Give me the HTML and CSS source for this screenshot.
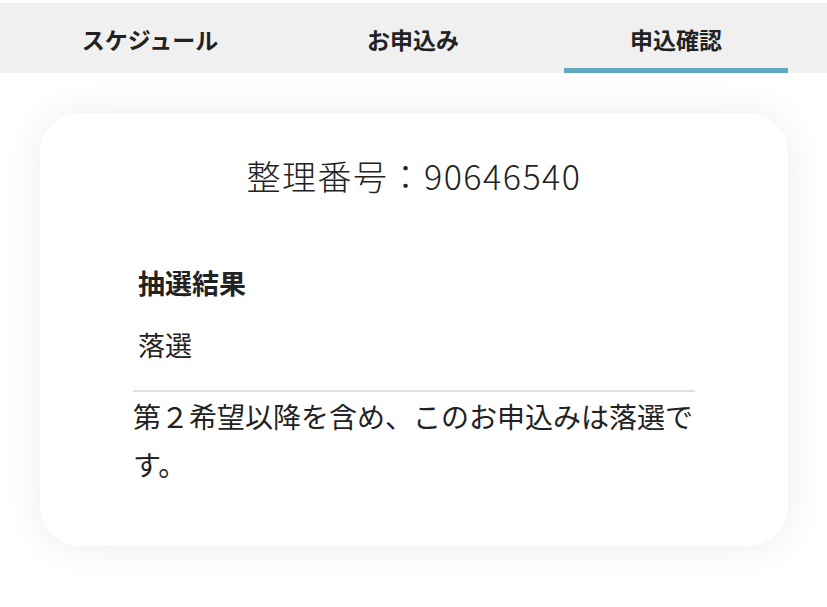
FILE: index.html
```html
<!DOCTYPE html>
<html lang="ja">
<head>
  <meta charset="UTF-8" />
  <meta name="viewport" content="width=device-width, initial-scale=1.0"/>
  <title>申込確認</title>
  <link rel="stylesheet" href="styles.css">
</head>
<body>

<nav class="tabs">
  <div class="tab">スケジュール</div>
  <div class="tab">お申込み</div>
  <div class="tab active">申込確認</div>
</nav>

<main class="main">
  <div class="card">
    <h1 class="number">整理番号：90646540</h1>

    <div class="result">
      <h2 class="result-label">抽選結果</h2>
      <p class="result-value">落選</p>
    </div>

    <p class="note">第２希望以降を含め、このお申込みは落選です。</p>
  </div>
</main>

</body>
</html>
```

FILE: styles.css
```css
* {
  box-sizing: border-box;
}

body {
  margin: 0;
  padding-top: 3px;
  background: #fff;
  font-family: "Noto Sans CJK JP", "Noto Sans", sans-serif;
  color: #222;
}

.tabs {
  display: grid;
  grid-template-columns: repeat(3, 224px);
  justify-content: space-between;
  height: 70px;
  padding: 0 39px 0 38px;
  background: #f0f0f0;
}

.tab {
  display: flex;
  align-items: center;
  justify-content: center;
  padding-top: 6px;
  font-size: 23px;
  font-weight: 700;
  border-bottom: 5px solid transparent;
}
.tab.active {
  border-bottom-color: #5ea9bf;
}

.main {
  padding: 40px 39px 60px 40px;
}

.card {
  background: #fff;
  border-radius: 40px;
  box-shadow: 0 0 40px rgba(0, 0, 0, 0.08);
  padding: 39px 93px 58px;
}

.number {
  margin: 0;
  font-size: 34px;
  font-weight: 300;
  letter-spacing: 1.5px;
  line-height: 48px;
  text-align: center;
}

.result {
  margin-top: 63px;
  padding: 0 5px 25px;
  border-bottom: 2px solid #e0e0e0;
}

.result-label {
  margin: 0;
  font-size: 27px;
  font-weight: 700;
  line-height: 40px;
}

.result-value {
  margin: 22px 0 0;
  font-size: 27px;
  line-height: 40px;
}

.note {
  margin: 0;
  font-size: 28px;
  line-height: 48px;
}
```
